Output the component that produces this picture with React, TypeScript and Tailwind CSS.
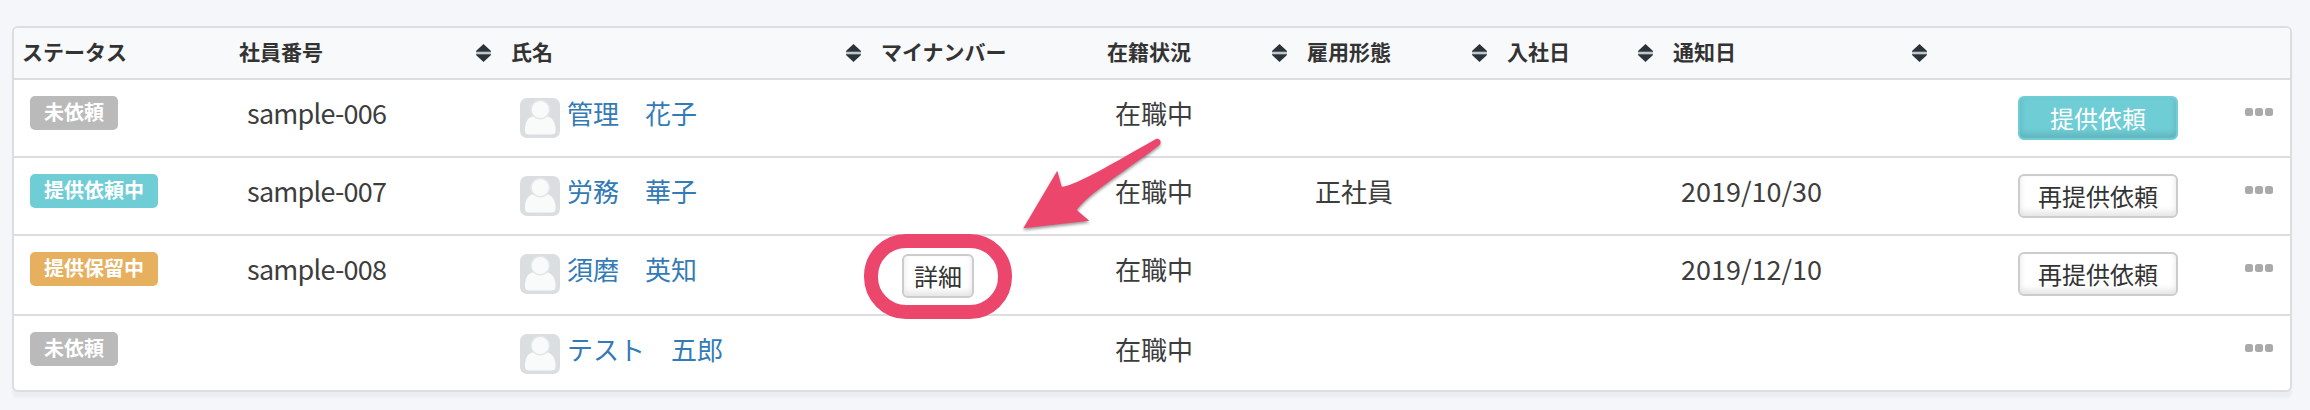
import React from "react";

type Tone = "gray" | "teal" | "amber";

interface Employee {
  status: string;
  tone: Tone;
  code: string;
  name: string;
  detail?: boolean;
  state: string;
  kind: string;
  notified: string;
  action?: { label: string; primary?: boolean };
  height: string;
}

const COLUMNS =
  "grid grid-cols-[217px_272px_370px_226px_200px_200px_166px_274px_1fr_71px]";

const HEADERS: { label: string; sortable?: boolean }[] = [
  { label: "ステータス" },
  { label: "社員番号", sortable: true },
  { label: "氏名", sortable: true },
  { label: "マイナンバー" },
  { label: "在籍状況", sortable: true },
  { label: "雇用形態", sortable: true },
  { label: "入社日", sortable: true },
  { label: "通知日", sortable: true },
  { label: "" },
  { label: "" },
];

const EMPLOYEES: Employee[] = [
  { status: "未依頼", tone: "gray", code: "sample-006", name: "管理　花子", state: "在職中", kind: "", notified: "", action: { label: "提供依頼", primary: true }, height: "h-[78px] border-b-2" },
  { status: "提供依頼中", tone: "teal", code: "sample-007", name: "労務　華子", state: "在職中", kind: "正社員", notified: "2019/10/30", action: { label: "再提供依頼" }, height: "h-[78px] border-b-2" },
  { status: "提供保留中", tone: "amber", code: "sample-008", name: "須磨　英知", detail: true, state: "在職中", kind: "", notified: "2019/12/10", action: { label: "再提供依頼" }, height: "h-20 border-b-2" },
  { status: "未依頼", tone: "gray", code: "", name: "テスト　五郎", state: "在職中", kind: "", notified: "", height: "h-[74px]" },
];

const TONES: Record<Tone, string> = {
  gray: "bg-[#bababa]",
  teal: "bg-[#6fcdd5]",
  amber: "bg-[#e6b05f]",
};

function SortIcon() {
  return (
    <svg className="h-[18px] w-[15px]" viewBox="0 0 15 18">
      <path d="M7.500 0 15 7V8H0V7Z" fill="#29333a" />
      <path d="M0 7.700h15v2.600H0Z" fill="#c3c7ca" />
      <path d="M0 10.300h15V11L7.500 18 0 11Z" fill="#29333a" />
    </svg>
  );
}

function Avatar() {
  return (
    <svg className="h-10 w-10 shrink-0" viewBox="0 0 40 40">
      <rect width="40" height="40" rx="7" fill="#dadee1" />
      <path
        d="M12 18.500h16c4.500 1.500 7.500 6.500 7.500 12.500v2c0 2.500-1.500 3.500-4 3.500H9C6.500 36.500 5 35.500 5 33v-2c0-6 2.500-11 7-12.500Z"
        fill="#f9fafa"
      />
      <circle cx="20.300" cy="11.500" r="9.300" fill="#f9fafa" stroke="#e3e6e8" strokeWidth="1.500" />
    </svg>
  );
}

function Button({ label, primary, size }: { label: string; primary?: boolean; size: string }) {
  const look = primary
    ? "border-[#6fcdd5] bg-[#6fcdd5] text-white shadow-[inset_0_-4px_6px_rgba(0,0,0,0.13)]"
    : "border-[#cccccc] bg-white text-[#333333] shadow-[inset_0_-4px_6px_rgba(0,0,0,0.11)]";
  return (
    <button className={`flex h-11 items-center justify-center rounded-md border-2 pb-px text-2xl leading-none whitespace-nowrap ${size} ${look}`}>
      {label}
    </button>
  );
}

function MoreIcon() {
  return (
    <div className="flex gap-[2px]">
      <span className="h-2 w-2 rounded-[2.500px] bg-[#aaaaaa]" />
      <span className="h-2 w-2 rounded-[2.500px] bg-[#aaaaaa]" />
      <span className="h-2 w-2 rounded-[2.500px] bg-[#aaaaaa]" />
    </div>
  );
}

function Highlight() {
  return (
    <>
      <div className="pointer-events-none absolute -top-[2px] -left-[9px] h-[85px] w-[148px] rounded-[42px] border-[14px] border-[#ec466c]" />
      <svg
        className="pointer-events-none absolute -top-[106px] left-[137px] h-[110px] w-[170px] drop-shadow-[0_2px_1.500px_rgba(0,0,0,0.4)]"
        viewBox="1010 130 170 110"
      >
        <path
          d="M1023.300 228.300 1057.300 170.700 1061.700 186.800C1074 185.500 1100 171 1155.500 139.200C1159 137.700 1162 141 1160 144.200C1158.500 146 1155 148 1151 151.500C1112 180 1089 194 1076.700 210L1089.300 220.700Z"
          fill="#ec466c"
        />
      </svg>
    </>
  );
}

const CELL = "pl-4 pt-[19px] leading-7 whitespace-nowrap";

export default function App() {
  return (
    <main className="h-[410px] w-[2310px] bg-[#f4f6fa] pt-[26px] pl-3 font-['Noto_Sans_CJK_JP',sans-serif] text-[#3d3d3d]">
      <section className="h-[366px] w-[2280px] rounded-md border-2 border-[#dcddde] bg-white shadow-[0_6px_2px_rgba(0,0,0,0.035)]">
        <div className={`${COLUMNS} h-[52px] rounded-t border-b-2 border-[#dcddde] bg-[#f8f9fb]`}>
          {HEADERS.map((h, i) => (
            <div key={i} className="flex items-start justify-between pt-[13px] pr-[12.500px] pl-2 text-[21px] leading-5 font-bold whitespace-nowrap text-[#333333]">
              <span>{h.label}</span>
              {h.sortable && <span className="pt-[3px]"><SortIcon /></span>}
            </div>
          ))}
        </div>
        {EMPLOYEES.map((e, i) => (
          <div key={i} className={`${COLUMNS} border-[#dcddde] ${e.height}`}>
            <div className="flex items-start pt-4 pl-4">
              <span className={`flex h-[34px] items-center rounded-[5px] px-[14px] pb-[2px] text-xl leading-none font-bold text-white ${TONES[e.tone]}`}>
                {e.status}
              </span>
            </div>
            <div className={`${CELL} text-[27px] tracking-[-0.75px]`}>{e.code}</div>
            <div className="flex gap-[7px] pt-[18px] pl-[17px]">
              <Avatar />
              <a className="pt-px text-[26px] leading-7 whitespace-nowrap text-[#337ab7]">{e.name}</a>
            </div>
            <div className="relative pt-[18px] pl-[29px]">
              {e.detail && (
                <>
                  <Button label="詳細" size="w-[72px]" />
                  <Highlight />
                </>
              )}
            </div>
            <div className={`${CELL} text-[26px]`}>{e.state}</div>
            <div className={`${CELL} text-[26px]`}>{e.kind}</div>
            <div />
            <div className={`${CELL} text-[27px]`}>{e.notified}</div>
            <div className="pt-4 pl-[79px]">
              {e.action && <Button label={e.action.label} primary={e.action.primary} size="w-40" />}
            </div>
            <div className="pt-7 pl-[26px]">
              <MoreIcon />
            </div>
          </div>
        ))}
      </section>
    </main>
  );
}
